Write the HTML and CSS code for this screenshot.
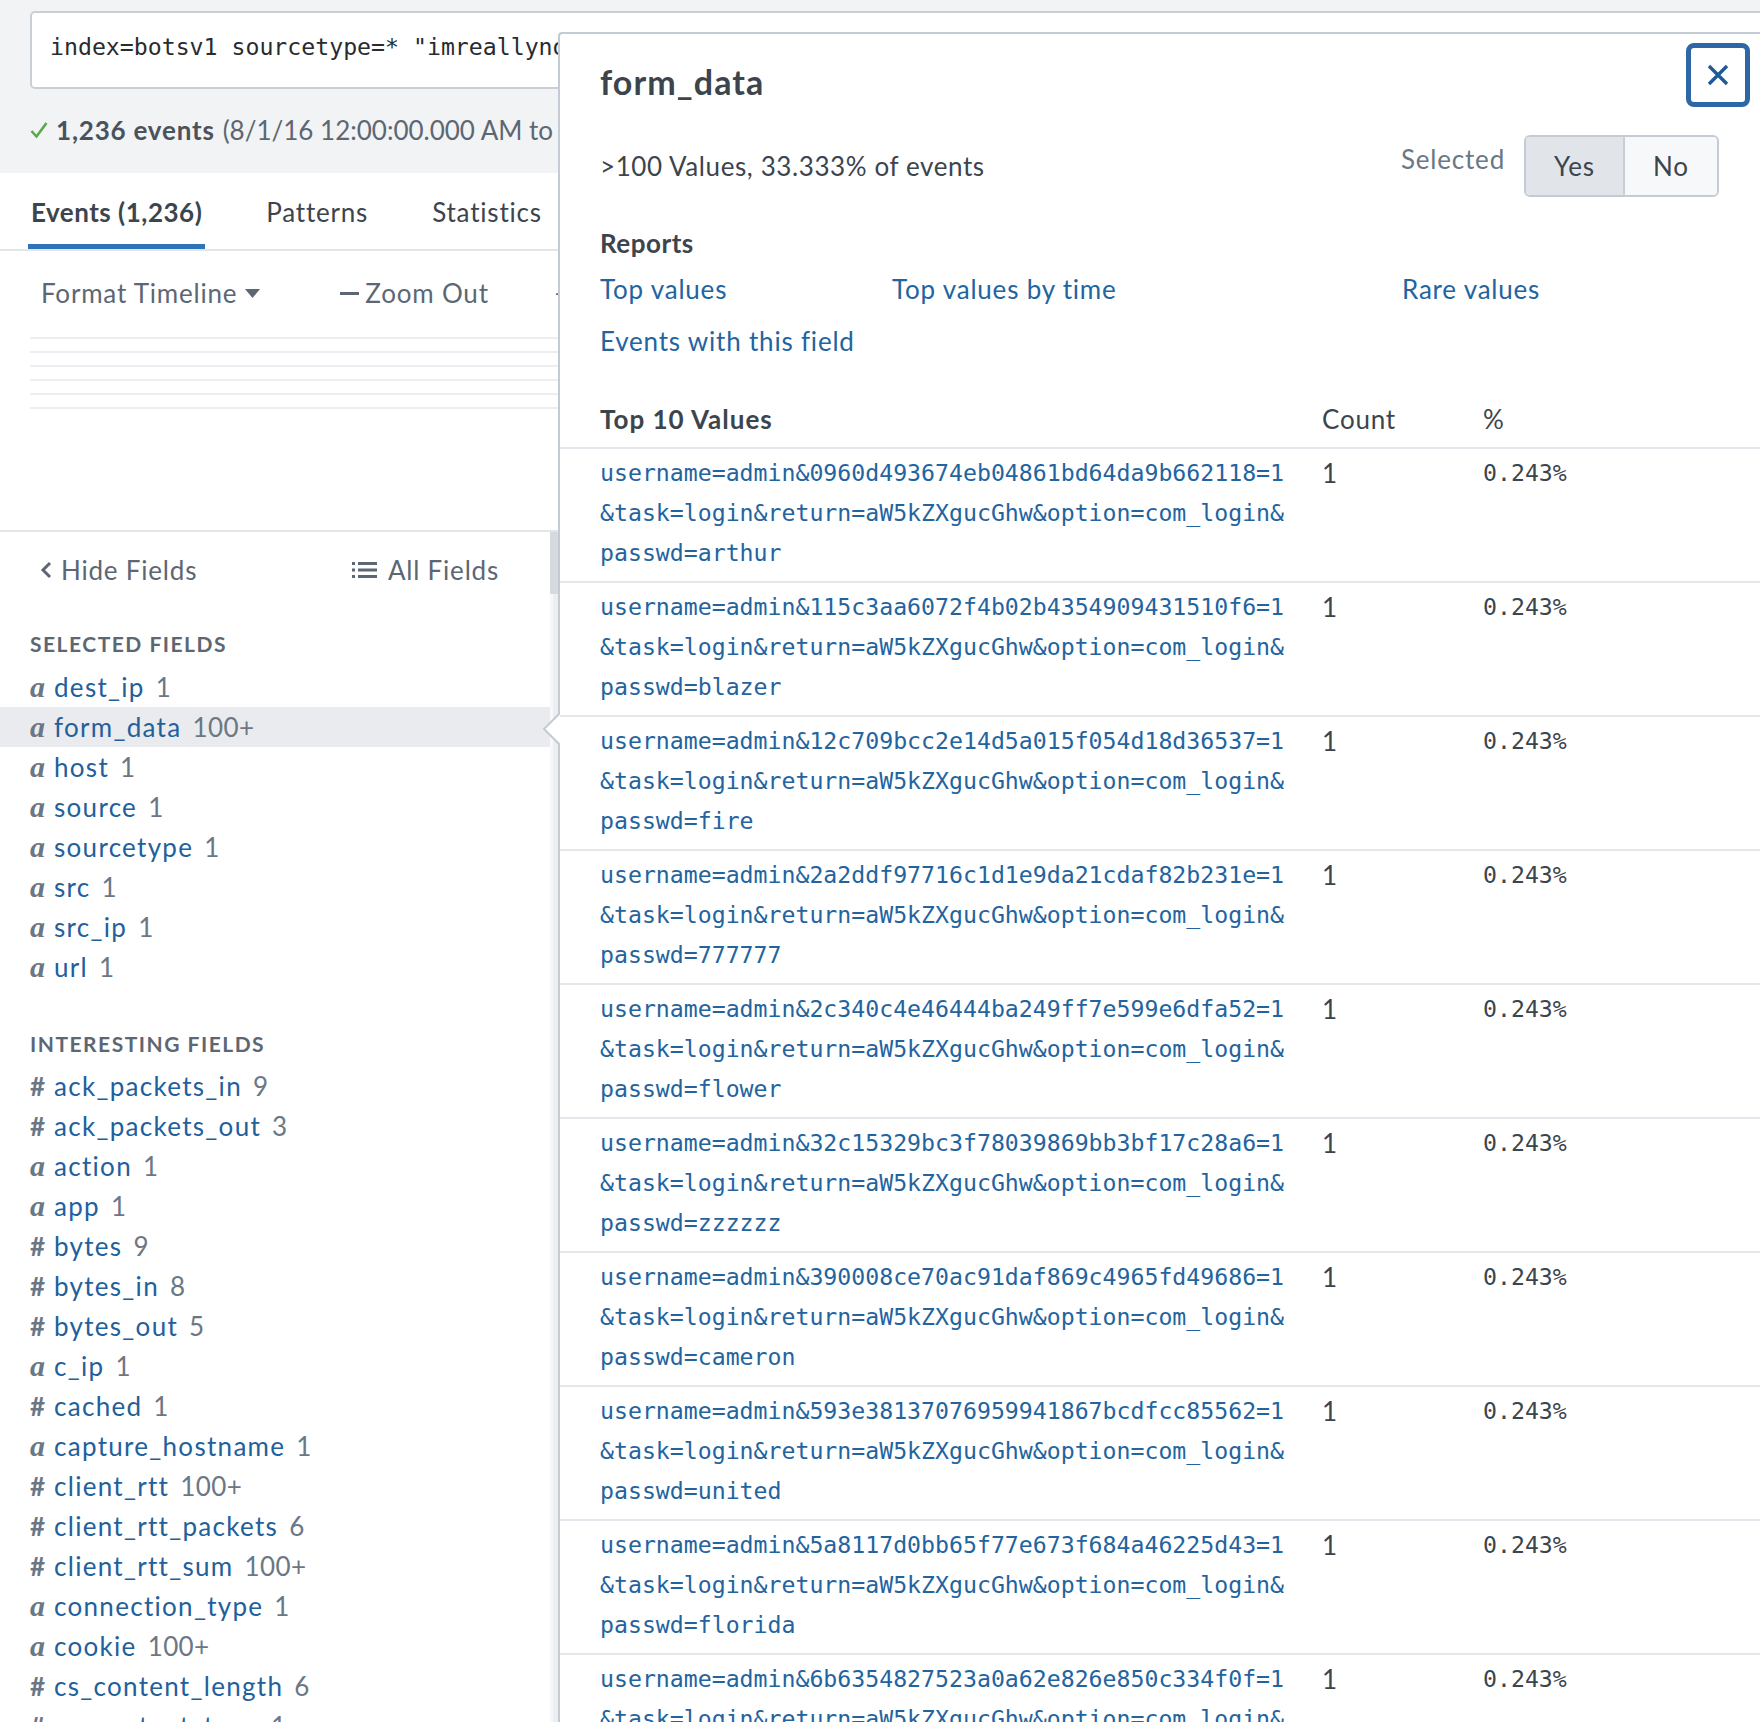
FILE: index.html
```html
<!DOCTYPE html>
<html lang="en">
<head>
<meta charset="utf-8">
<title>Search</title>
<link rel="stylesheet" href="styles.css">
</head>
<body>
<div class="page">
  <header class="search-band">
    <div class="search-box">index=botsv1 sourcetype=* "imreallynotbatman.com" form_data=*username*passwd* | table form_data</div>
    <div class="status">
      <svg class="check" width="18" height="18" viewBox="0 0 18 18"><polyline points="1.5,10 6.5,15.5 16.5,2" fill="none" stroke="#5aa84f" stroke-width="2.6"/></svg>
      <b>1,236 events</b> (8/1/16 12:00:00.000 AM to 9/1/16 12:00:00.000 AM)
    </div>
  </header>

  <nav class="tabs">
    <a class="tab active">Events (1,236)</a>
    <a class="tab">Patterns</a>
    <a class="tab">Statistics</a>
    <a class="tab">Visualization</a>
  </nav>

  <section class="timeline">
    <div class="tl-controls">
      <span class="tl-btn">Format Timeline<svg class="caret" width="15" height="9" viewBox="0 0 15 9"><polygon points="0,0 15,0 7.5,9" fill="#5c6773"/></svg></span>
      <span class="tl-btn zoom-out"><i class="minus"></i>Zoom Out</span>
      <span class="tl-btn zoom-sel">+ Zoom to Selection</span>
    </div>
    <div class="tl-lines"><i></i><i></i><i></i><i></i><i></i><i></i></div>
  </section>

  <section class="results">
    <aside class="sidebar">
      <div class="fields">
        <div class="fields-bar">
          <span class="bar-btn"><svg width="12" height="18" viewBox="0 0 12 18"><polyline points="10,2 3,9 10,16" fill="none" stroke="#5c6773" stroke-width="3"/></svg>Hide Fields</span>
          <span class="bar-btn all"><svg width="25" height="18" viewBox="0 0 25 18"><rect x="0" y="1" width="3" height="3" fill="#5c6773"/><rect x="6" y="1" width="19" height="3" fill="#5c6773"/><rect x="0" y="7.5" width="3" height="3" fill="#5c6773"/><rect x="6" y="7.5" width="19" height="3" fill="#5c6773"/><rect x="0" y="14" width="3" height="3" fill="#5c6773"/><rect x="6" y="14" width="19" height="3" fill="#5c6773"/></svg>All Fields</span>
        </div>

        <h3 class="fgroup first">Selected Fields</h3>
        <ul class="flist">
          <li><span class="ft ft-a">a</span><a class="fname">dest_ip</a><span class="fc">1</span></li>
          <li class="on"><span class="ft ft-a">a</span><a class="fname">form_data</a><span class="fc">100+</span></li>
          <li><span class="ft ft-a">a</span><a class="fname">host</a><span class="fc">1</span></li>
          <li><span class="ft ft-a">a</span><a class="fname">source</a><span class="fc">1</span></li>
          <li><span class="ft ft-a">a</span><a class="fname">sourcetype</a><span class="fc">1</span></li>
          <li><span class="ft ft-a">a</span><a class="fname">src</a><span class="fc">1</span></li>
          <li><span class="ft ft-a">a</span><a class="fname">src_ip</a><span class="fc">1</span></li>
          <li><span class="ft ft-a">a</span><a class="fname">url</a><span class="fc">1</span></li>
        </ul>

        <h3 class="fgroup">Interesting Fields</h3>
        <ul class="flist">
          <li><span class="ft ft-n">#</span><a class="fname">ack_packets_in</a><span class="fc">9</span></li>
          <li><span class="ft ft-n">#</span><a class="fname">ack_packets_out</a><span class="fc">3</span></li>
          <li><span class="ft ft-a">a</span><a class="fname">action</a><span class="fc">1</span></li>
          <li><span class="ft ft-a">a</span><a class="fname">app</a><span class="fc">1</span></li>
          <li><span class="ft ft-n">#</span><a class="fname">bytes</a><span class="fc">9</span></li>
          <li><span class="ft ft-n">#</span><a class="fname">bytes_in</a><span class="fc">8</span></li>
          <li><span class="ft ft-n">#</span><a class="fname">bytes_out</a><span class="fc">5</span></li>
          <li><span class="ft ft-a">a</span><a class="fname">c_ip</a><span class="fc">1</span></li>
          <li><span class="ft ft-n">#</span><a class="fname">cached</a><span class="fc">1</span></li>
          <li><span class="ft ft-a">a</span><a class="fname">capture_hostname</a><span class="fc">1</span></li>
          <li><span class="ft ft-n">#</span><a class="fname">client_rtt</a><span class="fc">100+</span></li>
          <li><span class="ft ft-n">#</span><a class="fname">client_rtt_packets</a><span class="fc">6</span></li>
          <li><span class="ft ft-n">#</span><a class="fname">client_rtt_sum</a><span class="fc">100+</span></li>
          <li><span class="ft ft-a">a</span><a class="fname">connection_type</a><span class="fc">1</span></li>
          <li><span class="ft ft-a">a</span><a class="fname">cookie</a><span class="fc">100+</span></li>
          <li><span class="ft ft-n">#</span><a class="fname">cs_content_length</a><span class="fc">6</span></li>
          <li><span class="ft ft-n">#</span><a class="fname">cs_content_type</a><span class="fc">1</span></li>
        </ul>
      </div>
      <div class="scrollbar"><div class="thumb"></div></div>
    </aside>
    <div class="events"></div>
  </section>

  <div class="popover">
    <svg class="pop-arrow" width="18" height="32" viewBox="0 0 18 32"><polygon points="18,0 2,16 18,32" fill="#fff"/><polyline points="18,0 2,16 18,32" fill="none" stroke="#c3cbd4" stroke-width="2"/></svg>
    <div class="pop-head">
      <h2 class="pop-title">form_data</h2>
      <button class="close"><svg width="22" height="22" viewBox="0 0 22 22"><path d="M2 2 L20 20 M20 2 L2 20" stroke="#1f5a98" stroke-width="3.4" fill="none"/></svg></button>
    </div>
    <div class="pop-stats">
      <span class="summary">&gt;100 Values, 33.333% of events</span>
      <span class="sel-label">Selected</span>
      <div class="seg"><span class="seg-btn active">Yes</span><span class="seg-btn">No</span></div>
    </div>
    <h4 class="pop-sub">Reports</h4>
    <div class="reports">
      <a class="lnk">Top values</a>
      <a class="lnk">Top values by time</a>
      <a class="lnk">Rare values</a>
      <a class="lnk">Events with this field</a>
    </div>
    <table class="vals">
      <colgroup><col class="c1"><col class="c2"><col class="c3"></colgroup>
      <thead>
        <tr><th class="v">Top 10 Values</th><th>Count</th><th>%</th></tr>
      </thead>
      <tbody>
        <tr><td class="v">username=admin&amp;0960d493674eb04861bd64da9b662118=1<br>&amp;task=login&amp;return=aW5kZXgucGhw&amp;option=com_login&amp;<br>passwd=arthur</td><td class="n">1</td><td class="p">0.243%</td></tr>
        <tr><td class="v">username=admin&amp;115c3aa6072f4b02b4354909431510f6=1<br>&amp;task=login&amp;return=aW5kZXgucGhw&amp;option=com_login&amp;<br>passwd=blazer</td><td class="n">1</td><td class="p">0.243%</td></tr>
        <tr><td class="v">username=admin&amp;12c709bcc2e14d5a015f054d18d36537=1<br>&amp;task=login&amp;return=aW5kZXgucGhw&amp;option=com_login&amp;<br>passwd=fire</td><td class="n">1</td><td class="p">0.243%</td></tr>
        <tr><td class="v">username=admin&amp;2a2ddf97716c1d1e9da21cdaf82b231e=1<br>&amp;task=login&amp;return=aW5kZXgucGhw&amp;option=com_login&amp;<br>passwd=777777</td><td class="n">1</td><td class="p">0.243%</td></tr>
        <tr><td class="v">username=admin&amp;2c340c4e46444ba249ff7e599e6dfa52=1<br>&amp;task=login&amp;return=aW5kZXgucGhw&amp;option=com_login&amp;<br>passwd=flower</td><td class="n">1</td><td class="p">0.243%</td></tr>
        <tr><td class="v">username=admin&amp;32c15329bc3f78039869bb3bf17c28a6=1<br>&amp;task=login&amp;return=aW5kZXgucGhw&amp;option=com_login&amp;<br>passwd=zzzzzz</td><td class="n">1</td><td class="p">0.243%</td></tr>
        <tr><td class="v">username=admin&amp;390008ce70ac91daf869c4965fd49686=1<br>&amp;task=login&amp;return=aW5kZXgucGhw&amp;option=com_login&amp;<br>passwd=cameron</td><td class="n">1</td><td class="p">0.243%</td></tr>
        <tr><td class="v">username=admin&amp;593e38137076959941867bcdfcc85562=1<br>&amp;task=login&amp;return=aW5kZXgucGhw&amp;option=com_login&amp;<br>passwd=united</td><td class="n">1</td><td class="p">0.243%</td></tr>
        <tr><td class="v">username=admin&amp;5a8117d0bb65f77e673f684a46225d43=1<br>&amp;task=login&amp;return=aW5kZXgucGhw&amp;option=com_login&amp;<br>passwd=florida</td><td class="n">1</td><td class="p">0.243%</td></tr>
        <tr><td class="v">username=admin&amp;6b6354827523a0a62e826e850c334f0f=1<br>&amp;task=login&amp;return=aW5kZXgucGhw&amp;option=com_login&amp;<br>passwd=hockey</td><td class="n">1</td><td class="p">0.243%</td></tr>
      </tbody>
    </table>
  </div>
</div>
</body>
</html>
```

FILE: styles.css
```css
* { box-sizing: border-box; margin: 0; padding: 0; }
html, body { width: 1760px; height: 1722px; overflow: hidden; background: #fff; }
body {
  font-family: Lato, "Open Sans", sans-serif;
  font-size: 26px;
  letter-spacing: 0.8px;
  color: #3c444d;
}
a { color: inherit; text-decoration: none; }
ul { list-style: none; }
b, strong { letter-spacing: 0.7px; }

.page { position: relative; width: 1760px; height: 1722px; overflow: hidden; }

.search-box, .vals td.v, .vals td.p {
  font-family: "DejaVu Sans Mono", "Liberation Mono", monospace;
  font-size: 23.2px;
  letter-spacing: 0;
}

/* search band */
.search-band { background: #f2f3f5; padding: 11px 0 23px 30px; }
.search-box {
  height: 78px;
  margin-right: -20px;
  background: #fff;
  border: 2px solid #c9cfd6;
  border-radius: 5px;
  padding: 0 18px;
  line-height: 68px;
  color: #272c31;
  white-space: nowrap;
  overflow: hidden;
}
.status {
  margin-top: 21px;
  height: 40px;
  line-height: 40px;
  color: #5c6773;
  letter-spacing: 0;
  white-space: nowrap;
  display: flex;
  align-items: center;
}
.status .check { margin-right: 8px; flex: none; }
.status b { color: #4a525b; font-weight: 700; letter-spacing: 0.8px; margin-right: 8px; }

/* tabs */
.tabs {
  display: flex;
  gap: 58px;
  padding-left: 28px;
  border-bottom: 2px solid #e1e6eb;
  height: 78px;
}
.tab {
  padding: 12px 3px 0;
  line-height: 54px;
  height: 76px;
  color: #3c444d;
  white-space: nowrap;
  border-bottom: 5px solid transparent;
}
.tab.active { font-weight: 700; letter-spacing: 0.5px; border-bottom-color: #2f74b8; }

/* timeline */
.timeline { height: 279px; padding-top: 22px; }
.tl-controls { display: flex; height: 40px; line-height: 40px; padding-left: 41px; color: #5c6773; white-space: nowrap; }
.tl-btn { display: flex; align-items: center; }
.tl-btn .caret { margin-left: 8px; }
.zoom-out { margin-left: 80px; }
.minus { display: inline-block; width: 19px; height: 3px; background: #5c6773; margin-right: 6px; }
.zoom-sel { margin-left: 66px; }
.tl-lines { margin-top: 24px; padding-left: 30px; display: flex; flex-direction: column; gap: 12px; }
.tl-lines i { display: block; height: 2px; background: #eceef1; }

/* results */
.results { display: flex; border-top: 2px solid #e1e6eb; height: 1200px; }
.sidebar { width: 558px; flex: none; display: flex; }
.fields { width: 550px; }
.scrollbar { width: 8px; background: #eceef0; border-left: 3px solid #f7f8f9; }
.scrollbar .thumb { height: 62px; background: #d6d9de; margin-left: -3px; }
.events { flex: 1; }

.fields-bar {
  display: flex;
  padding: 18px 51px 0 40px;
  height: 58px;
  line-height: 40px;
  color: #5c6773;
}
.bar-btn { display: flex; align-items: center; }
.bar-btn svg { margin-right: 9px; }
.bar-btn.all { margin-left: auto; }
.bar-btn.all svg { margin-right: 11px; }

.fgroup {
  padding-left: 30px;
  font-size: 21px;
  font-weight: 700;
  letter-spacing: 1.5px;
  text-transform: uppercase;
  color: #5c6773;
  line-height: 30px;
  margin-top: 39px;
  margin-bottom: 8px;
}
.flist + .fgroup { margin-top: 42px; margin-bottom: 7px; }

.flist li {
  height: 40px;
  line-height: 40px;
  padding-left: 30px;
  white-space: nowrap;
}
.flist li.on { background: #e9ebee; }
.ft { display: inline-block; width: 24px; color: #6b7785; letter-spacing: 0; }
.ft-a { font-family: "Liberation Serif", "DejaVu Serif", serif; font-style: italic; font-weight: 700; font-size: 30px; }
.ft-n { font-size: 26px; font-weight: 700; }
.fname { color: #22609c; letter-spacing: 1.3px; }
.fc { color: #6b7785; margin-left: 11px; letter-spacing: 0.4px; }

/* popover */
.popover {
  position: absolute;
  left: 558px;
  top: 32px;
  right: 0;
  bottom: -4px;
  background: #fff;
  border: 2px solid #c3cbd4;
  border-right: none;
  border-top-left-radius: 4px;
}
.pop-arrow { position: absolute; left: -18px; top: 679px; }
.pop-head { display: flex; align-items: flex-start; margin-top: 9px; padding: 0 10px 0 40px; }
.pop-title { font-size: 34px; font-weight: 700; letter-spacing: 1.1px; line-height: 40px; margin-top: 19px; color: #3c444d; }
.close {
  margin-left: auto;
  width: 64px;
  height: 64px;
  border: 5px solid #2d67a6;
  border-radius: 8px;
  background: #fff;
  display: flex;
  align-items: center;
  justify-content: center;
}
.pop-stats { display: flex; align-items: center; margin-top: 28px; padding: 0 41px 0 40px; height: 62px; }
.summary { color: #3c444d; letter-spacing: 0.6px; }
.sel-label { margin-left: auto; margin-right: 19px; color: #6b7785; padding-bottom: 14px; }
.seg { display: flex; border: 2px solid #c3cbd4; border-radius: 6px; height: 62px; overflow: hidden; }
.seg-btn { display: flex; align-items: center; justify-content: center; background: #f7f8fa; color: #3c444d; }
.seg-btn.active { width: 99px; background: #e1e4e9; border-right: 2px solid #c9cfd6; }
.seg-btn:last-child { width: 92px; }

.pop-sub { padding-left: 40px; margin-top: 26px; font-size: 26px; font-weight: 700; letter-spacing: 0.5px; line-height: 40px; }
.reports {
  display: grid;
  grid-template-columns: 292px 510px auto;
  row-gap: 12px;
  padding-left: 40px;
  margin-top: 6px;
  line-height: 40px;
}
.lnk { color: #23649f; white-space: nowrap; }

.vals { margin-top: 38px; width: 100%; border-collapse: collapse; table-layout: fixed; }
.vals col.c1 { width: 762px; }
.vals col.c2 { width: 161px; }
.vals th {
  text-align: left;
  font-weight: 400;
  line-height: 40px;
  padding-bottom: 8px;
  border-bottom: 2px solid #e4e8ec;
}
.vals th.v { font-weight: 700; letter-spacing: 1px; padding-left: 40px; }
.vals td {
  vertical-align: top;
  line-height: 40px;
  padding: 4px 0 8px;
  border-bottom: 2px solid #e4e8ec;
  white-space: nowrap;
}
.vals td.v { padding-left: 40px; color: #23649f; }
.vals td.n { color: #3c444d; }
.vals td.p { color: #3c444d; }
```
